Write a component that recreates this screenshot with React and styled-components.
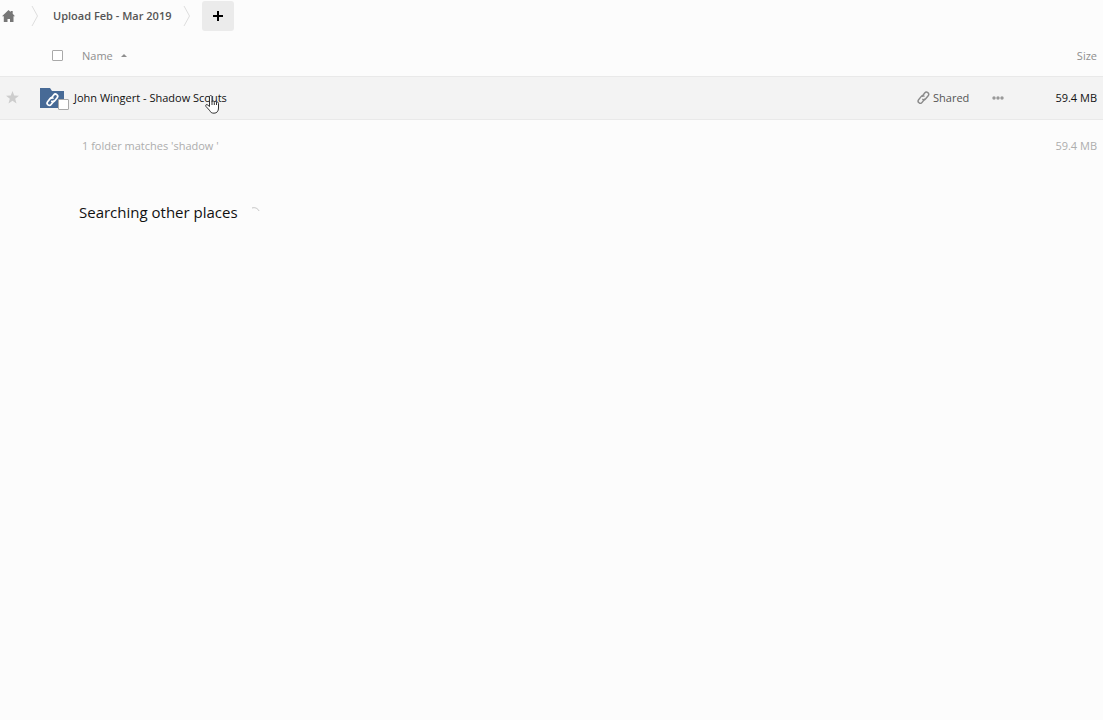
import React from "react";
import styled, { createGlobalStyle } from "styled-components";

const GlobalStyle = createGlobalStyle`
  * { box-sizing: border-box; }
  body {
    margin: 0;
    background: #fcfcfc;
    color: #111;
    font-family: "Open Sans", "Noto Sans", sans-serif;
    font-size: 11px;
    line-height: 20px;
  }
`;

const Breadcrumbs = styled.nav`
  display: flex;
  align-items: center;
  height: 32px;
`;

const Crumb = styled.a`
  display: flex;
  color: #555;
  font-weight: 600;
  text-decoration: none;
`;

const HomeCrumb = styled(Crumb)`
  padding-left: 2px;
  color: #777;
`;

const Chevron = styled.svg`
  display: block;
  width: 8px;
  height: 24px;
  margin: 0 ${(p) => p.$after}px 0 ${(p) => p.$before}px;
  fill: none;
  stroke: #dedede;
`;

const NewButton = styled.button`
  display: flex;
  align-items: center;
  justify-content: center;
  width: 32px;
  height: 30px;
  padding: 0;
  border: 0;
  border-radius: 3px;
  background: #ebebeb;
  color: #000;
`;

const PlainButton = styled.button`
  display: flex;
  align-items: center;
  gap: ${(p) => p.$gap || 0}px;
  padding: 0;
  border: 0;
  background: none;
  color: ${(p) => p.$color || "inherit"};
  font: inherit;
`;

const Table = styled.table`
  width: 100%;
  margin-top: 4px;
  border-collapse: collapse;
  table-layout: fixed;
`;

const HeadRow = styled.tr`
  height: 40px;
  color: #8e8e8e;
`;

const FileRow = styled.tr`
  height: 43px;
  background: #f3f3f3;
  border-top: 1px solid #e9e9e9;
  border-bottom: 1px solid #e9e9e9;
`;

const SummaryRow = styled.tr`
  height: 54px;
  color: #adadad;
`;

const Col = styled.col`
  width: ${(p) => (p.$width ? `${p.$width}px` : "auto")};
`;

const Cell = styled.td`
  padding: 0 ${(p) => p.$right || 0}px 0 ${(p) => p.$left || 0}px;
  text-align: ${(p) => p.$align || "left"};
  font-weight: 400;
  white-space: nowrap;
`;

const Group = styled.div`
  position: relative;
  display: flex;
  align-items: center;
  gap: ${(p) => p.$gap}px;
`;

const Checkbox = styled.input`
  appearance: none;
  width: 11px;
  height: 11px;
  margin: 0;
  border: 1px solid #a9a9a9;
  border-radius: 1px;
  background: #fff;
`;

const FolderIcon = styled.div`
  position: relative;
  width: 24px;
  height: 22px;

  ${Checkbox} {
    position: absolute;
    right: -5px;
    bottom: -1px;
  }
`;

const FileLink = styled.a`
  color: inherit;
  text-decoration: none;
`;

const Icon = styled.svg`
  display: block;
  flex: none;
`;

const Pointer = styled(Icon)`
  position: absolute;
  left: 165px;
  top: 8px;
  pointer-events: none;
`;

const Searching = styled.section`
  display: flex;
  align-items: center;
  gap: 10px;
  margin-top: 27px;
  padding-left: 79px;
`;

const SearchTitle = styled.h2`
  margin: 0;
  font-size: 15px;
  line-height: 24px;
  font-weight: 400;
`;

function Separator({ before, after }) {
  return (
    <Chevron $before={before} $after={after} viewBox="0 0 8 24" aria-hidden="true">
      <path d="M1 2 6.5 12 1 22" />
    </Chevron>
  );
}

function ChainPaths() {
  return (
    <g fill="none" stroke="currentColor" strokeLinecap="round">
      <path d="M5.200 5.200 7.700 2a2.200 2.200 0 0 1 3.500 2.700L8.700 7.800a2.200 2.200 0 0 1-2.900.5" />
      <path d="M7 5.100a2.200 2.200 0 0 0-2.900.5L1.600 8.700a2.200 2.200 0 0 0 3.500 2.700L7.600 8.200" />
    </g>
  );
}

export default function App() {
  return (
    <>
      <GlobalStyle />
      <Breadcrumbs aria-label="Breadcrumb">
        <HomeCrumb href="#home" aria-label="Home">
          <Icon width="13" height="12" viewBox="0 0 13 12">
            <path
              fill="currentColor"
              d="M6.500 0 8.700 2V1h2v2.800L13 6.200h-1.500V12H8V9H5.500v3H1.800V6.200H0Z"
            />
          </Icon>
        </HomeCrumb>
        <Separator before={16} after={14} />
        <Crumb href="#upload">Upload Feb - Mar 2019</Crumb>
        <Separator before={12} after={11} />
        <NewButton type="button" aria-label="New">
          <Icon width="12" height="12" viewBox="0 0 12 12">
            <path d="M6 1v10M1 6h10" stroke="currentColor" strokeWidth="2" />
          </Icon>
        </NewButton>
      </Breadcrumbs>

      <Table>
        <colgroup>
          <Col $width={40} />
          <Col />
          <Col $width={74} />
          <Col $width={40} />
          <Col $width={72} />
        </colgroup>
        <thead>
          <HeadRow>
            <Cell />
            <Cell as="th" scope="col" colSpan={3} $left={12}>
              <Group $gap={19}>
                <Checkbox type="checkbox" aria-label="Select all" />
                <PlainButton type="button" $gap={8}>
                  Name
                  <Icon width="6" height="3" viewBox="0 0 6 3">
                    <path fill="currentColor" d="M0 3 3 0l3 3Z" />
                  </Icon>
                </PlainButton>
              </Group>
            </Cell>
            <Cell as="th" scope="col" $align="right" $right={6}>
              Size
            </Cell>
          </HeadRow>
        </thead>
        <tbody>
          <FileRow>
            <Cell $left={6}>
              <PlainButton type="button" aria-label="Favorite" $color="#cdcdcd">
                <Icon width="13" height="13" viewBox="0 0 13 13">
                  <path
                    fill="currentColor"
                    d="m6.500 0 1.700 4.500 4.800.2-3.800 3 1.300 4.800-4-2.700-4 2.700 1.300-4.800L0 4.700l4.800-.2Z"
                  />
                </Icon>
              </PlainButton>
            </Cell>
            <Cell>
              <Group $gap={10}>
                <FolderIcon>
                  <Icon width="24" height="22" viewBox="0 0 24 22" color="#fff">
                    <path fill="#476a96" d="M0 1h10l2 3h12v17H0Z" />
                    <g transform="translate(6 6)" strokeWidth="1.700">
                      <ChainPaths />
                    </g>
                  </Icon>
                  <Checkbox type="checkbox" aria-label="Select John Wingert - Shadow Scouts" />
                </FolderIcon>
                <FileLink href="#shadow-scouts">John Wingert - Shadow Scouts</FileLink>
                <Pointer width="15" height="19" viewBox="0 0 15 19" aria-hidden="true">
                  <path
                    fill="#fff"
                    stroke="#333"
                    strokeLinejoin="round"
                    d="M4.500 11.500V2c0-2 2.500-2 2.500 0v5c0-1.500 2.300-1.300 2.300.3 0-1.300 2.200-1.200 2.200.5 0-1.200 2-1 2 .6V13c0 3-1.500 5.200-4.500 5.200-2.500 0-3.500-1-4.600-3L1 11.500c-1-1.800.8-2.600 1.900-1.300Z"
                  />
                  <path stroke="#333" d="M7 7v3M9.300 7.500v2.500M11.500 8v2" />
                </Pointer>
              </Group>
            </Cell>
            <Cell>
              <PlainButton type="button" $gap={3} $color="#555">
                <Icon width="13" height="13" viewBox="0 0 13 13" color="#8a8a8a" strokeWidth="1.400">
                  <ChainPaths />
                </Icon>
                Shared
              </PlainButton>
            </Cell>
            <Cell $left={1}>
              <PlainButton type="button" aria-label="More actions" $color="#999">
                <Icon width="12" height="4" viewBox="0 0 12 4" fill="currentColor">
                  <circle cx="2" cy="2" r="1.700" />
                  <circle cx="6" cy="2" r="1.700" />
                  <circle cx="10" cy="2" r="1.700" />
                </Icon>
              </PlainButton>
            </Cell>
            <Cell $align="right" $right={6}>
              59.4 MB
            </Cell>
          </FileRow>
        </tbody>
        <tfoot>
          <SummaryRow>
            <Cell />
            <Cell colSpan={3} $left={42}>
              1 folder matches 'shadow '
            </Cell>
            <Cell $align="right" $right={6}>
              59.4 MB
            </Cell>
          </SummaryRow>
        </tfoot>
      </Table>

      <Searching aria-live="polite">
        <SearchTitle>Searching other places</SearchTitle>
        <Icon width="12" height="12" viewBox="0 0 12 12" aria-hidden="true">
          <path d="M4 2c3-1 6 .5 7 3" fill="none" stroke="#c4c4c4" />
        </Icon>
      </Searching>
    </>
  );
}
